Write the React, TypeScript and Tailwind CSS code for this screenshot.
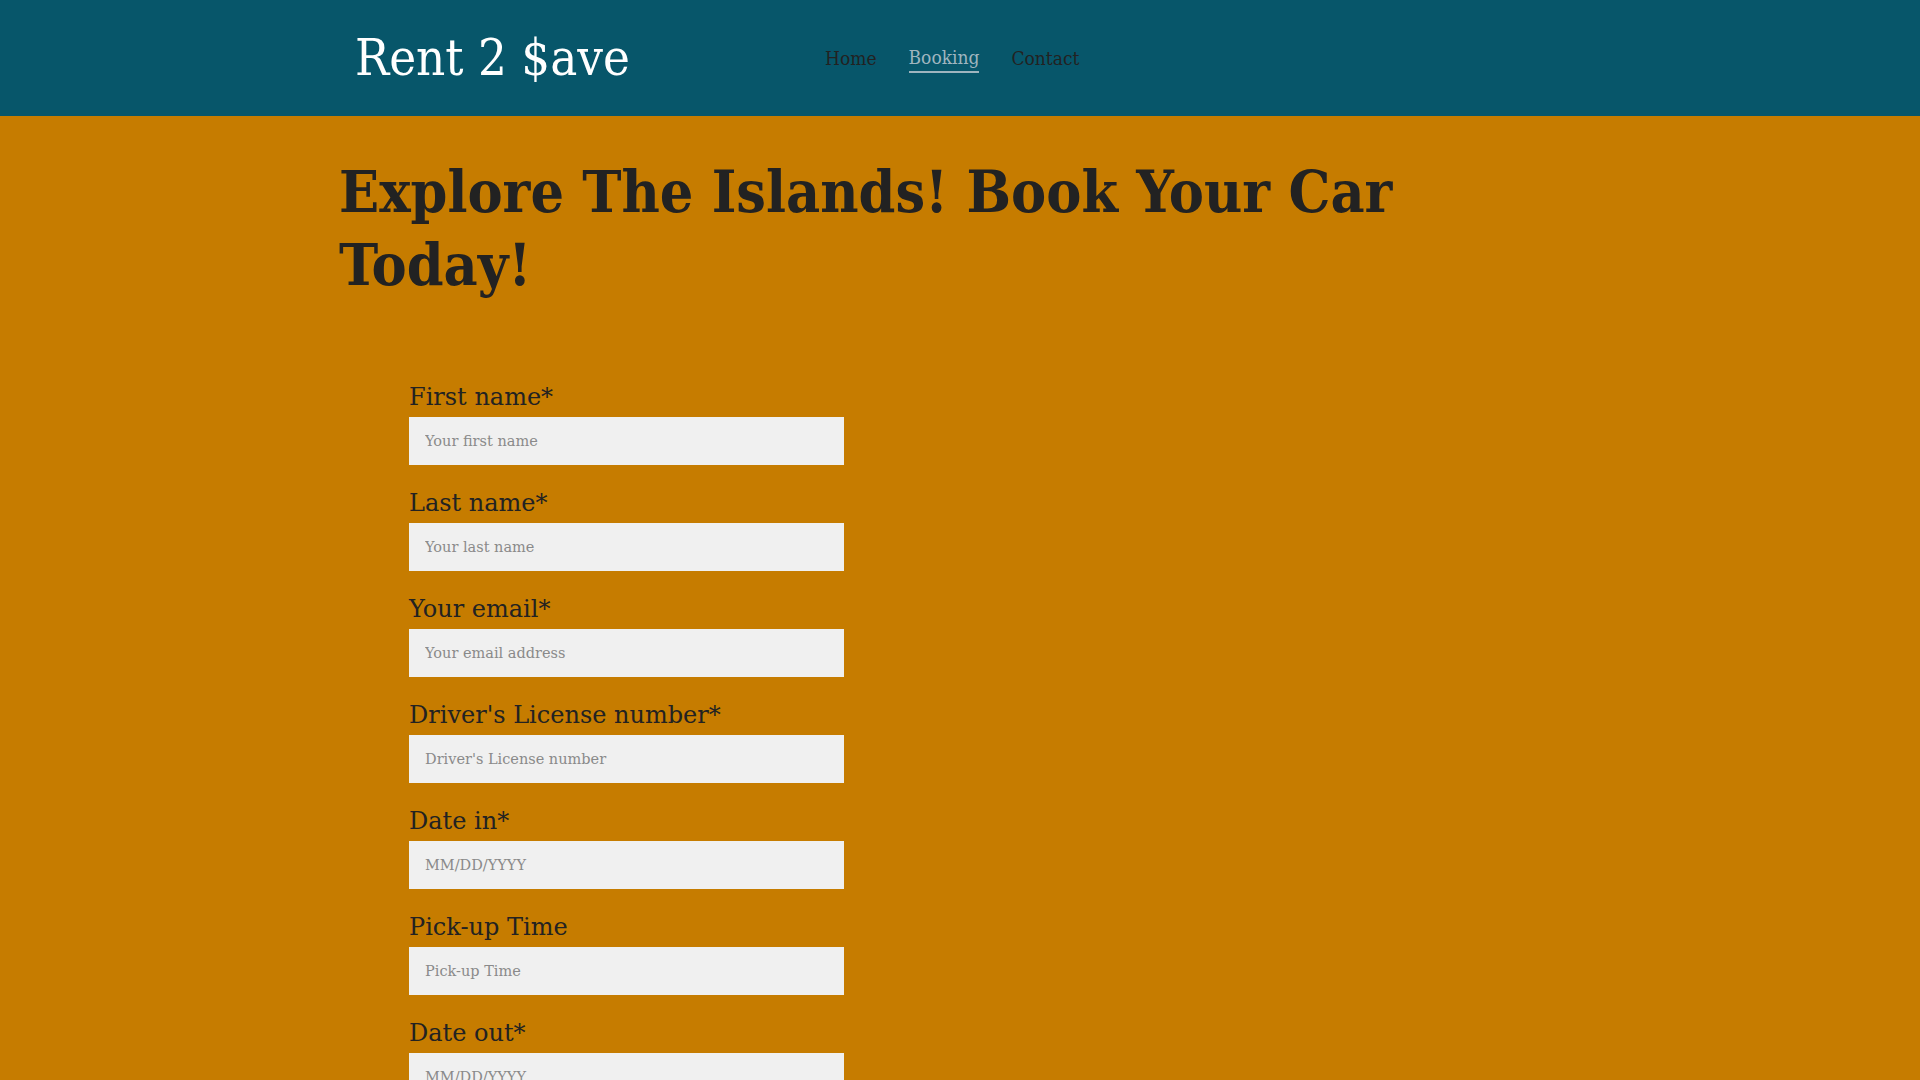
const fields = [
  { label: "First name*", placeholder: "Your first name" },
  { label: "Last name*", placeholder: "Your last name" },
  { label: "Your email*", placeholder: "Your email address" },
  { label: "Driver's License number*", placeholder: "Driver's License number" },
  { label: "Date in*", placeholder: "MM/DD/YYYY" },
  { label: "Pick-up Time", placeholder: "Pick-up Time" },
  { label: "Date out*", placeholder: "MM/DD/YYYY" },
  { label: "Drop-off Time", placeholder: "Drop-off Time" },
];

function App() {
  return (
    <div className="min-h-[1400px] bg-[#c67c00] font-['DejaVu_Serif',serif] text-[#222]">
      <header className="h-[116px] bg-[#07566a]">
        <div className="flex h-full items-center pl-[339px] font-['DejaVu_Serif_Condensed','DejaVu_Serif',serif] [font-stretch:condensed]">
          <h1 className="ml-[16px] w-[470px] text-[50.5px] leading-none text-white">
            Rent 2 $ave
          </h1>
          <nav className="flex items-center gap-[32px] text-[19px]">
            <a className="text-[#222]">Home</a>
            <a className="border-b-2 border-[#9fb5bf] text-[#9fb5bf]">Booking</a>
            <a className="text-[#222]">Contact</a>
          </nav>
        </div>
      </header>
      <main className="pl-[339px]">
        <h2 className="pt-[39px] font-['DejaVu_Serif_Condensed','DejaVu_Serif',serif] text-[58.6px] font-bold leading-[73px] [font-stretch:condensed]">
          Explore The Islands! Book Your Car
          <br />
          Today!
        </h2>
        <form className="ml-[70px] mt-[58px] flex w-[435px] flex-col">
          {fields.map((f) => (
            <div key={f.label} className="flex flex-col">
              <label className="flex h-[58px] items-end pb-[4px] text-[24px] leading-[32px]">
                {f.label}
              </label>
              <input
                className="h-[48px] bg-[#f0f0f0] px-[16px] text-[14.5px] outline-none placeholder:text-[#8a8a8a]"
                placeholder={f.placeholder}
              />
            </div>
          ))}
        </form>
      </main>
    </div>
  );
}

export default App;
